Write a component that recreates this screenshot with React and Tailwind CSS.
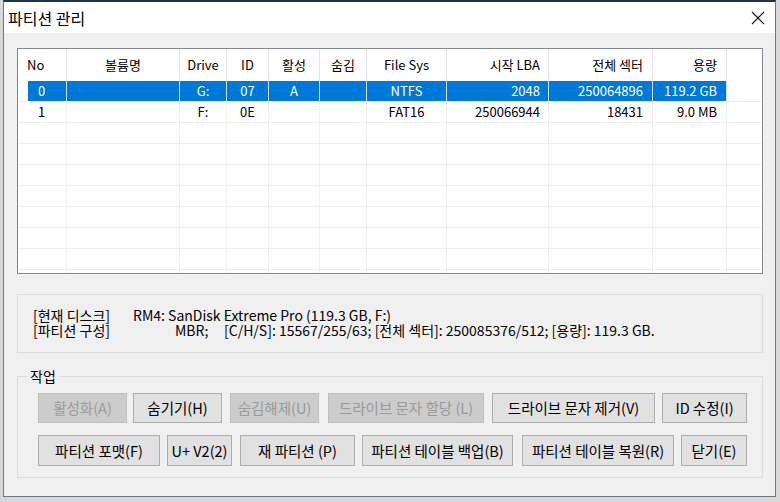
import React from 'react';

const COLS = [
  { key: 'no', label: 'No', w: 'w-[49px]', head: 'justify-start pl-[9px]', cell: 'justify-start pl-[10px]' },
  { key: 'vol', label: '볼륨명', w: 'w-[113px]', head: 'justify-center', cell: 'justify-center' },
  { key: 'drive', label: 'Drive', w: 'w-[47px]', head: 'justify-center', cell: 'justify-center' },
  { key: 'id', label: 'ID', w: 'w-[42px]', head: 'justify-center', cell: 'justify-center' },
  { key: 'act', label: '활성', w: 'w-[51px]', head: 'justify-center', cell: 'justify-center' },
  { key: 'hid', label: '숨김', w: 'w-[47px]', head: 'justify-center', cell: 'justify-center' },
  { key: 'fs', label: 'File Sys', w: 'w-[80px]', head: 'justify-center', cell: 'justify-center' },
  { key: 'lba', label: '시작 LBA', w: 'w-[102px]', head: 'justify-end pr-[8px]', cell: 'justify-end pr-[8px]' },
  { key: 'sec', label: '전체 섹터', w: 'w-[104px]', head: 'justify-end pr-[9px]', cell: 'justify-end pr-[9px]' },
  { key: 'size', label: '용량', w: 'w-[74px]', head: 'justify-end pr-[9px]', cell: 'justify-end pr-[9px]' },
];

const ROWS = [
  { no: '0', vol: '', drive: 'G:', id: '07', act: 'A', hid: '', fs: 'NTFS', lba: '2048', sec: '250064896', size: '119.2 GB', selected: true },
  { no: '1', vol: '', drive: 'F:', id: '0E', act: '', hid: '', fs: 'FAT16', lba: '250066944', sec: '18431', size: '9.0 MB' },
];

const EMPTY_ROWS = 8;

const Btn = ({ children, className = '', disabled }) => (
  <button
    type="button"
    className={
      'h-[30px] shrink-0 flex items-center justify-center border text-[14.5px] whitespace-nowrap ' +
      (disabled
        ? 'bg-[#cccccc] border-[#bfbfbf] text-[#9a9a9a] '
        : 'bg-[#e1e1e1] border-[#adadad] text-black ') +
      className
    }
  >
    {children}
  </button>
);

const App = () => {
  return (
    <div className="w-[780px] h-[502px] bg-[#d8d8d8] overflow-hidden font-['Noto_Sans_CJK_KR',sans-serif]">
      <div className="ml-[3px] w-[773px] h-[497px] flex flex-col bg-[#f0f0f0] border border-t-2 border-[#6b7785] border-t-[#1f3346]">
        {/* title bar */}
        <div className="h-[31px] bg-white flex items-center justify-between pl-[4px] pr-[10px] shrink-0">
          <span className="text-[16px] text-black leading-none">파티션 관리</span>
          <svg width="14" height="14" viewBox="0 0 14 14">
            <path d="M1 1 L13 13 M13 1 L1 13" stroke="#111" strokeWidth="1.1" fill="none" />
          </svg>
        </div>

        <div className="pl-[13px] pr-[12px] pt-[15px] flex flex-col">
          {/* partition list */}
          <div className="h-[226px] border border-[#828790] bg-white overflow-hidden text-[13px] text-black">
            <div className="flex h-[32px]">
              {COLS.map((c) => (
                <div key={c.key} className={`${c.w} ${c.head} flex items-center border-r border-[#e5e5e5] shrink-0`}>
                  {c.label}
                </div>
              ))}
              <div className="flex-1" />
            </div>

            {ROWS.map((r) => (
              <div key={r.no} className="flex h-[21px] border-b border-[#f0f0f0]">
                {COLS.map((c, i) => (
                  <div key={c.key} className={`${c.w} flex shrink-0 ${r.selected ? '' : 'border-r border-[#f0f0f0]'}`}>
                    {i === 0 && r.selected && <div className="w-[10px] bg-white shrink-0" />}
                    <div
                      className={`flex-1 flex items-center ${i === 0 && r.selected ? 'pl-[10px]' : c.cell} ${
                        i === 0 && !r.selected ? 'pl-[20px]' : ''
                      } ${r.selected ? 'bg-[#0078d7] text-white border-r border-[#cfe3f6]' : ''}`}
                    >
                      {r[c.key]}
                    </div>
                  </div>
                ))}
                <div className="flex-1" />
              </div>
            ))}

            {Array.from({ length: EMPTY_ROWS }).map((_, k) => (
              <div key={k} className="flex h-[21px] border-b border-[#f0f0f0]">
                {COLS.map((c) => (
                  <div key={c.key} className={`${c.w} shrink-0 border-r border-[#f0f0f0]`} />
                ))}
                <div className="flex-1" />
              </div>
            ))}
          </div>

          {/* disk info */}
          <div className="mt-[20px] h-[59px] border border-[#dcdcdc] pl-[15px] pt-[13px] text-[14px] leading-[15px] text-black">
            <div className="flex">
              <span className="w-[100px]">[현재 디스크]</span>
              <span>RM4: SanDisk Extreme Pro (119.3 GB, F:)</span>
            </div>
            <div className="flex">
              <span className="w-[100px]">[파티션 구성]</span>
              <span className="ml-[42px] w-[49px]">MBR;</span>
              <span>[C/H/S]: 15567/255/63; [전체 섹터]: 250085376/512; [용량]: 119.3 GB.</span>
            </div>
          </div>

          {/* actions */}
          <fieldset className="mt-[14px] h-[111px] border border-[#dcdcdc]">
            <legend className="ml-[9px] px-[3px] text-[14px] leading-[18px] text-black">작업</legend>
            <div className="flex mt-[8px] ml-[20px]">
              <Btn disabled className="w-[89px]">활성화(A)</Btn>
              <Btn className="w-[89px] ml-[6px]">숨기기(H)</Btn>
              <Btn disabled className="w-[89px] ml-[8px]">숨김해제(U)</Btn>
              <Btn disabled className="w-[156px] ml-[9px]">드라이브 문자 할당 (L)</Btn>
              <Btn className="w-[163px] ml-[8px]">드라이브 문자 제거(V)</Btn>
              <Btn className="w-[85px] ml-[7px]">ID 수정(I)</Btn>
            </div>
            <div className="flex mt-[12px] ml-[20px]">
              <Btn className="w-[122px] h-[31px]">파티션 포맷(F)</Btn>
              <Btn className="w-[65px] h-[31px] ml-[7px]">U+ V2(2)</Btn>
              <Btn className="w-[115px] h-[31px] ml-[8px]">재 파티션 (P)</Btn>
              <Btn className="w-[151px] h-[31px] ml-[7px]">파티션 테이블 백업(B)</Btn>
              <Btn className="w-[152px] h-[31px] ml-[9px]">파티션 테이블 복원(R)</Btn>
              <Btn className="w-[66px] h-[31px] ml-[7px]">닫기(E)</Btn>
            </div>
          </fieldset>
        </div>
      </div>
    </div>
  );
};

export default App;
